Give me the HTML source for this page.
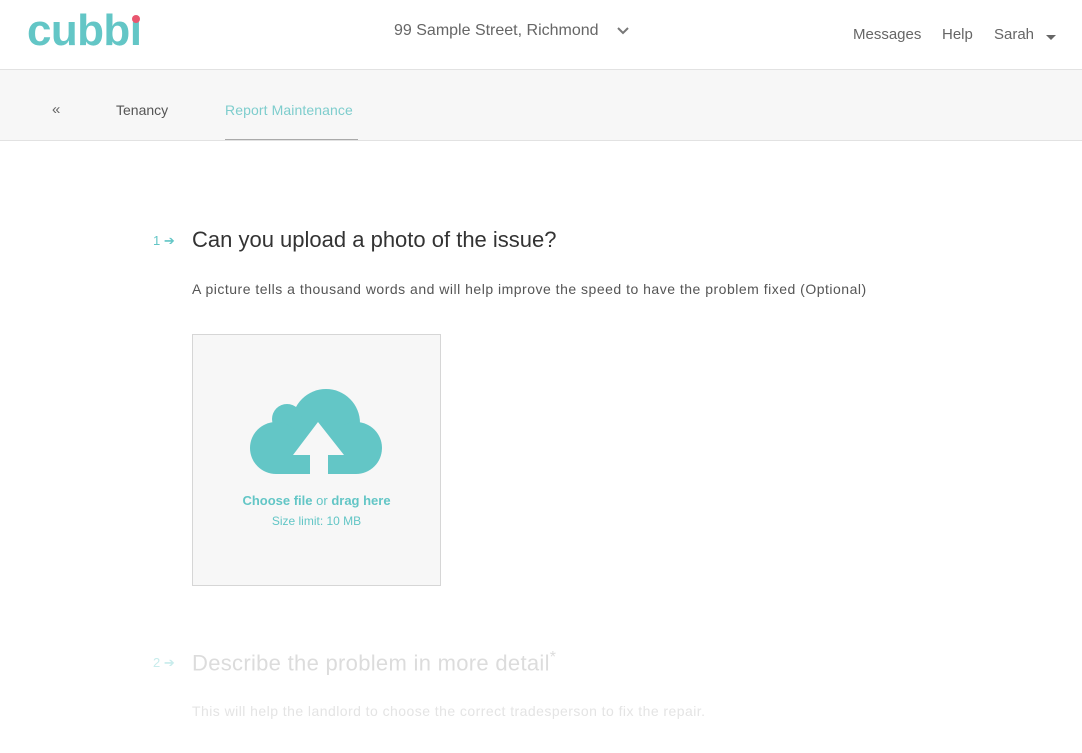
<!DOCTYPE html>
<html><head><style>
body{margin:0;width:1082px;height:753px;overflow:hidden;background:#fff;font-family:"Liberation Sans",sans-serif;position:relative}
.a{position:absolute;white-space:nowrap}
</style></head><body>
<div class="a" style="left:27px;top:6px;font-size:44px;font-weight:bold;color:#63c6c6;letter-spacing:-0.6px">cubb<span style="position:relative">ı<span style="position:absolute;left:2px;top:9px;width:8px;height:8px;border-radius:50%;background:#e9566f"></span></span></div>
<div class="a" style="left:394px;top:22px;font-size:16px;color:#666">99 Sample Street, Richmond</div>
<svg class="a" style="left:617px;top:26px" width="12" height="9"><path d="M1 2l5 5 5-5" stroke="#777" stroke-width="2" fill="none"/></svg>
<div class="a" style="left:853px;top:26px;font-size:15px;color:#666">Messages</div>
<div class="a" style="left:942px;top:26px;font-size:15px;color:#666">Help</div>
<div class="a" style="left:994px;top:26px;font-size:15px;color:#666">Sarah</div>
<svg class="a" style="left:1046px;top:35px" width="10" height="6"><path d="M0 0h10L5 5z" fill="#666"/></svg>
<div class="a" style="left:0;top:69px;width:1082px;height:70px;background:#f7f7f7;border-top:1px solid #e2e2e2;border-bottom:1px solid #e2e2e2"></div>
<div class="a" style="left:52px;top:101px;font-size:15px;color:#666">«</div>
<div class="a" style="left:116px;top:102px;font-size:14px;color:#555">Tenancy</div>
<div class="a" style="left:225px;top:102px;font-size:14px;color:#7ecdcd;letter-spacing:0.1px">Report Maintenance</div>
<div class="a" style="left:225px;top:139px;width:133px;height:1px;background:#aaa"></div>
<div class="a" style="left:153px;top:233px;font-size:13px;color:#63c6c6">1 ➔</div>
<div class="a" style="left:192px;top:227px;font-size:22px;color:#333">Can you upload a photo of the issue?</div>
<div class="a" style="left:192px;top:281px;font-size:14px;color:#555;letter-spacing:0.5px">A picture tells a thousand words and will help improve the speed to have the problem fixed (Optional)</div>
<div class="a" style="left:192px;top:334px;width:247px;height:250px;background:#f7f7f7;border:1px solid #d6d6d6"></div>
<svg class="a" style="left:0;top:0" width="1082" height="753">
<g fill="#63c6c6"><circle cx="326" cy="423" r="34"/><circle cx="287" cy="419" r="15"/><circle cx="276" cy="448" r="26"/><circle cx="356" cy="448" r="26"/><rect x="276" y="430" width="80" height="44"/></g>
<path d="M318 422L293 455H310V474H328V455H344Z" fill="#f7f7f7"/>
</svg>
<div class="a" style="left:192px;top:493px;width:249px;text-align:center;font-size:13px;color:#63c6c6"><b>Choose file</b> or <b>drag here</b></div>
<div class="a" style="left:192px;top:514px;width:249px;text-align:center;font-size:12px;color:#63c6c6">Size limit: 10 MB</div>
<div class="a" style="left:153px;top:655px;font-size:13px;color:#c8ecec">2 ➔</div>
<div class="a" style="left:192px;top:649px;font-size:22px;color:#dcdcdc;letter-spacing:0.3px">Describe the problem in more detail<sup style="font-size:16px">*</sup></div>
<div class="a" style="left:192px;top:703px;font-size:14px;color:#e4e4e4;letter-spacing:0.45px">This will help the landlord to choose the correct tradesperson to fix the repair.</div>
</body></html>
